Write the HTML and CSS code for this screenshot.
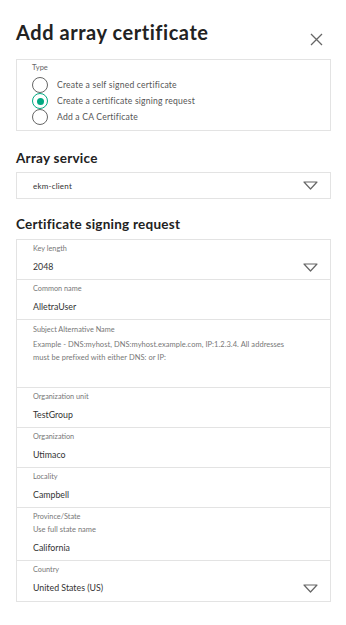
FILE: index.html
```html
<!DOCTYPE html>
<html>
<head>
<meta charset="utf-8">
<link rel="stylesheet" href="styles.css">
</head>
<body>
<div class="panel">
  <div class="header">
    <h1 class="title">Add array certificate</h1>
    <span class="close" aria-label="Close">
      <svg width="13" height="13" viewBox="0 0 13 13"><path d="M1 1 L12 12 M12 1 L1 12" stroke="#666" stroke-width="1.3" fill="none"/></svg>
    </span>
  </div>

  <div class="box type-box">
    <div class="type-label">Type</div>
    <div class="radio-row"><span class="radio"></span><span class="radio-text">Create a self signed certificate</span></div>
    <div class="radio-row"><span class="radio checked"><span class="dot"></span></span><span class="radio-text">Create a certificate signing request</span></div>
    <div class="radio-row"><span class="radio"></span><span class="radio-text">Add a CA Certificate</span></div>
  </div>

  <h2 class="section">Array service</h2>
  <div class="box select-box">
    <span class="select-value">ekm-client</span>
    <svg class="caret" width="15" height="9" viewBox="0 0 15 9"><path d="M1 1 L14 1 L7.5 8 Z" stroke="#666" stroke-width="1.2" fill="none" stroke-linejoin="round"/></svg>
  </div>

  <h2 class="section section2">Certificate signing request</h2>
  <div class="box fields">
    <div class="row has-caret">
      <div class="lbl">Key length</div>
      <div class="val">2048</div>
      <svg class="caret row-caret" width="15" height="9" viewBox="0 0 15 9"><path d="M1 1 L14 1 L7.5 8 Z" stroke="#666" stroke-width="1.2" fill="none" stroke-linejoin="round"/></svg>
    </div>
    <div class="row">
      <div class="lbl">Common name</div>
      <div class="val">AlletraUser</div>
    </div>
    <div class="row san">
      <div class="lbl">Subject Alternative Name</div>
      <div class="hint">Example - DNS:myhost, DNS:myhost.example.com, IP:1.2.3.4. All addresses must be prefixed with either DNS: or IP:</div>
    </div>
    <div class="row">
      <div class="lbl">Organization unit</div>
      <div class="val">TestGroup</div>
    </div>
    <div class="row">
      <div class="lbl">Organization</div>
      <div class="val">Utimaco</div>
    </div>
    <div class="row">
      <div class="lbl">Locality</div>
      <div class="val">Campbell</div>
    </div>
    <div class="row">
      <div class="lbl">Province/State</div>
      <div class="hint1">Use full state name</div>
      <div class="val">California</div>
    </div>
    <div class="row has-caret last">
      <div class="lbl">Country</div>
      <div class="val">United States (US)</div>
      <svg class="caret row-caret" width="15" height="9" viewBox="0 0 15 9"><path d="M1 1 L14 1 L7.5 8 Z" stroke="#666" stroke-width="1.2" fill="none" stroke-linejoin="round"/></svg>
    </div>
  </div>
</div>
</body>
</html>
```

FILE: styles.css
```css
* { box-sizing: border-box; }
html, body { margin: 0; padding: 0; background: #fff; }
body {
  font-family: Lato, "Open Sans", "Liberation Sans", sans-serif;
  color: #333;
}
.panel {
  width: 346px;
  padding: 0 15px 0 16px;
}
.header {
  display: flex;
  justify-content: space-between;
  align-items: flex-start;
  padding-top: 20px;
  height: 59px;
}
.title {
  margin: 0;
  font-size: 20px;
  font-weight: 700;
  line-height: 24px;
  color: #222;
  letter-spacing: 0.55px;
}
.close {
  display: flex;
  margin-top: 13px;
  margin-right: 8px;
}
.box {
  border: 1px solid #e3e3e3;
}
.type-box {
  height: 72px;
  padding: 3px 0 0 15px;
}
.type-label {
  font-size: 7.5px;
  line-height: 10px;
  color: #666;
  margin-bottom: 4px;
}
.radio-row {
  display: flex;
  align-items: center;
  height: 16px;
}
.radio {
  width: 16px;
  height: 16px;
  border: 1.2px solid #666;
  border-radius: 50%;
  display: flex;
  align-items: center;
  justify-content: center;
  flex: none;
}
.radio.checked {
  border: 1.5px solid #01a982;
}
.dot {
  width: 7px;
  height: 7px;
  border-radius: 50%;
  background: #01a982;
}
.radio-text {
  margin-left: 9px;
  font-size: 8.6px;
  letter-spacing: 0.2px;
  color: #555;
}
.section {
  margin: 0;
  font-size: 13.5px;
  font-weight: 700;
  color: #222;
  line-height: 16px;
  letter-spacing: 0.25px;
  padding-top: 19px;
  height: 41px;
}
.section2 {
  padding-top: 17px;
  height: 40px;
}
.select-box {
  height: 27px;
  display: flex;
  align-items: center;
  justify-content: space-between;
  padding: 0 12px 0 16px;
}
.select-value {
  font-size: 8px;
  letter-spacing: 0.2px;
  color: #333;
}
.caret { display: block; }
.row {
  position: relative;
  border-bottom: 1px solid #e3e3e3;
  padding: 4px 16px 5px 16px;
  min-height: 40px;
}
.row.last { border-bottom: none; }
.lbl {
  font-size: 7.3px;
  line-height: 10px;
  color: #777;
}
.val {
  margin-top: 6px;
  font-size: 8.8px;
  line-height: 14px;
  color: #333;
}
.hint1 {
  margin-top: 3px;
  font-size: 7.5px;
  line-height: 10px;
  color: #777;
}
.hint {
  margin-top: 3px;
  font-size: 7.5px;
  line-height: 13px;
  color: #777;
  padding-right: 18px;
  letter-spacing: 0.05px;
}
.san { height: 68px; padding-top: 5px; }
.row-caret {
  position: absolute;
  right: 12px;
  top: 23px;
}
```
